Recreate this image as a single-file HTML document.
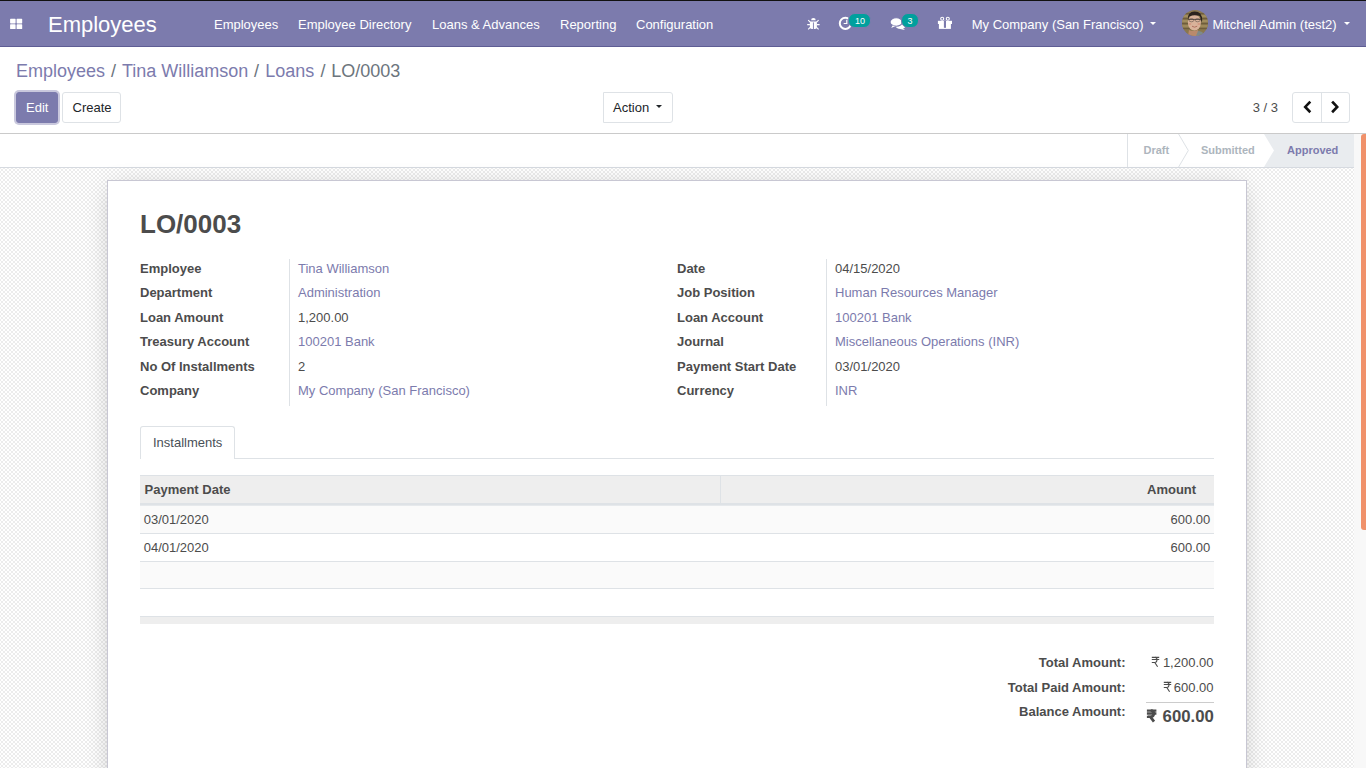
<!DOCTYPE html>
<html><head><meta charset="utf-8">
<style>
html,body{margin:0;padding:0}
body{width:1366px;height:768px;overflow:hidden;position:relative;background:#fff;font-family:"Liberation Sans",sans-serif;color:#4c4c4c;font-size:13px}
.a{position:absolute}
.t{position:absolute;white-space:nowrap;line-height:1}
.w{color:#fff}
.lnk{color:#7c7bad}
.b{font-weight:bold}
#topline{left:0;top:0;width:1366px;height:1px;background:#111}
#nav{left:0;top:1px;width:1366px;height:45px;background:#7c7bad;border-bottom:1px solid #5e5d94}
#cp{left:0;top:47px;width:1366px;height:86px;background:#fff;border-bottom:1px solid #cacaca}
#sb{left:0;top:134px;width:1354px;height:33px;background:#fff;border-bottom:1px solid #d6dae0}
#bg{left:0;top:168px;width:1354px;height:600px;background-color:#fff;background-image:repeating-conic-gradient(#ececec 0 25%,#fff 0 50%);background-size:4px 4px;background-position:3px 1px}
#sheet{left:107px;top:180px;width:1138px;height:620px;background:#fff;border:1px solid #c8c7d3;box-shadow:0 4px 24px -6px rgba(0,0,0,.26)}
#track{left:1354px;top:134px;width:12px;height:634px;background:#f8f8f8}
#thumb{left:1361px;top:134px;width:5px;height:396px;background:#f0916a;border-radius:3px 0 0 3px}
.btn{position:absolute;box-sizing:border-box;border:1px solid #dee2e6;background:#fff;border-radius:3px}
</style></head><body>
<div class="a" id="topline"></div>
<div class="a" id="nav"></div>
<div class="a" id="cp"></div>
<div class="a" id="sb"></div>
<div class="a" id="bg"></div>
<div class="a" id="sheet"></div>
<div class="a" id="track"></div>
<div class="a" id="thumb"></div>
<!-- apps icon -->
<svg class="a" style="left:8px;top:17px" width="16" height="14" viewBox="0 0 16 14">
 <rect x="2.1" y="1.8" width="5.5" height="4.6" rx="0.6" fill="#fff"/>
 <rect x="8.6" y="1.8" width="5.6" height="4.6" rx="0.6" fill="#fff"/>
 <rect x="2.1" y="7.3" width="5.5" height="4.7" rx="0.6" fill="#fff"/>
 <rect x="8.6" y="7.3" width="5.6" height="4.7" rx="0.6" fill="#fff"/>
</svg>
<div class="t w" style="left:48px;top:13.6px;font-size:22px">Employees</div>
<div class="t w" style="left:214px;top:18px">Employees</div>
<div class="t w" style="left:298px;top:18px">Employee Directory</div>
<div class="t w" style="left:432px;top:18px">Loans &amp; Advances</div>
<div class="t w" style="left:560px;top:18px">Reporting</div>
<div class="t w" style="left:636px;top:18px">Configuration</div>

<div class="t w" style="left:971.7px;top:18px">My Company (San Francisco)</div>
<div class="t w" style="left:1212.4px;top:18px">Mitchell Admin (test2)</div>


<!-- navbar icons -->
<svg class="a" style="left:806px;top:17px" width="14" height="14" viewBox="0 0 14 14">
 <path d="M5.1,3.3 A2.3,2.3 0 0 1 9.7,3.3 Z" fill="#fff"/>
 <path d="M3.9,4.5 H10.9 V10.2 Q10.9,12 9,12 H5.8 Q3.9,12 3.9,10.2 Z" fill="#fff"/>
 <rect x="6.95" y="5.4" width="0.9" height="7" fill="#7c7bad"/>
 <path d="M4.2,5.2 L2.2,3.1 M3.9,7.6 H1.2 M4.2,10.4 L2.2,12.4 M10.6,5.2 L12.6,3.1 M10.9,7.6 H13.6 M10.6,10.4 L12.6,12.4" stroke="#fff" stroke-width="1.1" fill="none"/>
</svg>
<svg class="a" style="left:838px;top:16px" width="16" height="16" viewBox="0 0 16 16">
 <circle cx="7.4" cy="7.35" r="5.6" stroke="#fff" stroke-width="2" fill="none"/>
 <path d="M8.8,3.7 V7.5 H5.7" stroke="#fff" stroke-width="1.2" fill="none"/>
</svg>
<div class="a" style="left:848.2px;top:12.9px;width:21px;height:13.1px;border-radius:7px;background:#00a09d;border:1px solid #7c7bad"></div>
<div class="t w" style="left:855px;top:16.5px;font-size:9px">10</div>
<svg class="a" style="left:886px;top:12px" width="22" height="20" viewBox="0 0 22 20">
 <ellipse cx="14.6" cy="13.4" rx="5.2" ry="3.7" fill="#fff"/>
 <path d="M16.4,15.8 L19,18.1 L14,17 Z" fill="#fff"/>
 <ellipse cx="10.2" cy="10" rx="6.15" ry="4.3" fill="#fff" stroke="#7c7bad" stroke-width="1.1"/>
 <path d="M6.6,13.6 L5.2,16 L9.6,14.1 Z" fill="#fff"/>
</svg>
<div class="a" style="left:901px;top:12.9px;width:16px;height:13.1px;border-radius:7px;background:#00a09d;border:1px solid #7c7bad"></div>
<div class="t w" style="left:907.5px;top:16.5px;font-size:9px">3</div>
<svg class="a" style="left:937px;top:16px" width="16" height="14" viewBox="0 0 16 14">
 <circle cx="5.2" cy="2.7" r="1.5" stroke="#fff" stroke-width="1.1" fill="none"/>
 <circle cx="10.8" cy="2.7" r="1.5" stroke="#fff" stroke-width="1.1" fill="none"/>
 <rect x="0.9" y="4.8" width="14.1" height="3.2" fill="#fff"/>
 <rect x="1.9" y="7.9" width="12" height="5" fill="#fff"/>
 <rect x="6.9" y="5" width="2.1" height="6.8" fill="#7c7bad"/>
</svg>
<div class="a" style="left:1149.7px;top:22px;width:0;height:0;border-top:3.5px solid #fff;border-left:3.2px solid transparent;border-right:3.2px solid transparent"></div>
<div class="a" style="left:1343.7px;top:21.5px;width:0;height:0;border-top:3.5px solid #fff;border-left:3.2px solid transparent;border-right:3.2px solid transparent"></div>
<div class="a" style="left:1182px;top:10px;width:26px;height:26px;border-radius:50%;overflow:hidden"><svg style="display:block" width="26" height="26" viewBox="0 0 26 26">
 <g>
  <rect width="26" height="26" fill="#8a774e"/>
  <rect x="0" y="3" width="26" height="1.2" fill="#6e5d3c"/>
  <rect x="0" y="8" width="26" height="1.2" fill="#6e5d3c"/>
  <rect x="0" y="13" width="26" height="1.2" fill="#6e5d3c"/>
  <rect x="0" y="18" width="26" height="1.2" fill="#6e5d3c"/>
  <rect x="0" y="5" width="26" height="2" fill="#a08c5e"/>
  <rect x="0" y="10" width="26" height="2" fill="#a08c5e"/>
  <rect x="0" y="15" width="26" height="2" fill="#9c885a"/>
  <path d="M6,26 L7,20 Q11,22 16,20 L17,26 Z" fill="#b98a6c"/>
  <path d="M14,26 L16,21 Q20,21 22,24 L22,26 Z" fill="#7e8a8a"/>
  <ellipse cx="12.4" cy="12.6" rx="6.5" ry="8" fill="#d9b29a"/>
  <path d="M5.8,9.6 Q5.4,1.6 12.6,1.4 Q20.4,1.4 20.2,10.6 L19.4,12.6 Q19,6.6 17,5.8 Q12,4.2 7.4,6.4 Q6.4,7.6 5.8,9.6 Z" fill="#2a221e"/>
  <path d="M6,9.4 H19" stroke="#3b3430" stroke-width="0.8"/>
  <ellipse cx="9.4" cy="10.2" rx="2.4" ry="1.6" fill="none" stroke="#4a413c" stroke-width="0.5"/>
  <ellipse cx="15.6" cy="10.2" rx="2.4" ry="1.6" fill="none" stroke="#4a413c" stroke-width="0.5"/>
  <ellipse cx="8" cy="14" rx="1.4" ry="1" fill="#d49a84"/>
  <ellipse cx="16.8" cy="14" rx="1.4" ry="1" fill="#d49a84"/>
  <path d="M10,16.2 Q12.6,18.2 15.2,16.2" stroke="#b07060" stroke-width="1" fill="none"/>
 </g>
</svg></div>



<div class="t lnk" style="left:16px;top:62px;font-size:18px">Employees</div>
<div class="t" style="left:111px;top:62px;font-size:18px;color:#6c757d">/</div>
<div class="t lnk" style="left:122px;top:62px;font-size:18px">Tina Williamson</div>
<div class="t" style="left:254px;top:62px;font-size:18px;color:#6c757d">/</div>
<div class="t lnk" style="left:265.3px;top:62px;font-size:18px">Loans</div>
<div class="t" style="left:320.6px;top:62px;font-size:18px;color:#6c757d">/</div>
<div class="t" style="left:331.3px;top:62px;font-size:18px;color:#6c757d">LO/0003</div>

<!-- buttons -->
<div class="a" style="left:14px;top:90px;width:46px;height:35px;border-radius:5px;background:#c9c8dd"></div>
<div class="btn" style="left:16px;top:92px;width:42px;height:31px;background:#7c7bad;border-color:#7c7bad"></div>
<div class="t w" style="left:26px;top:101px">Edit</div>
<div class="btn" style="left:62px;top:92px;width:59px;height:31px"></div>
<div class="t" style="left:72.5px;top:101px;color:#212529">Create</div>
<div class="btn" style="left:603px;top:92px;width:70px;height:31px;border-radius:0 3px 3px 0"></div>
<div class="t" style="left:613px;top:101px;color:#212529">Action</div>
<div class="a" style="left:656.2px;top:104.8px;width:0;height:0;border-top:3.6px solid #212529;border-left:3.3px solid transparent;border-right:3.3px solid transparent"></div>

<div class="t" style="left:1252.7px;top:101px;color:#4c4c4c">3 / 3</div>
<div class="btn" style="left:1292px;top:92px;width:58px;height:31px"></div>
<div class="a" style="left:1321px;top:93px;width:1px;height:29px;background:#dee2e6"></div>
<!-- pager chevrons -->
<svg class="a" style="left:1300px;top:98px" width="14" height="18" viewBox="0 0 14 18">
 <path d="M9.4,4.5 L5.2,8.9 L9.4,13.3" stroke="#111" stroke-width="2.6" fill="none" stroke-linecap="square"/>
</svg>
<svg class="a" style="left:1328px;top:98px" width="14" height="18" viewBox="0 0 14 18">
 <path d="M5,4.5 L9.2,8.9 L5,13.3" stroke="#111" stroke-width="2.6" fill="none" stroke-linecap="square"/>
</svg>



<!-- statusbar -->
<svg class="a" style="left:1100px;top:134px" width="254" height="33" viewBox="0 0 254 33">
 <rect x="27" y="0" width="1" height="33" fill="#dee2e6"/>
 <path d="M78.3,-0.5 L88.3,16.5 L78.3,33.5" stroke="#dee2e6" stroke-width="1" fill="none"/>
 <path d="M164,0 H254 V33 H164 L174,16.5 Z" fill="#e9ecef"/>
</svg>
<div class="t b" style="left:1143.5px;top:144.7px;font-size:11px;color:#adb5bd">Draft</div>
<div class="t b" style="left:1201px;top:144.7px;font-size:11px;color:#adb5bd">Submitted</div>
<div class="t b" style="left:1287px;top:144.7px;font-size:11px;color:#7c7bad">Approved</div>

<!-- sheet content -->
<div class="t b" style="left:140px;top:211.4px;font-size:26px">LO/0003</div>
<div class="a" style="left:289px;top:259px;width:1px;height:147px;background:#dee2e6"></div>
<div class="a" style="left:826px;top:259px;width:1px;height:147px;background:#dee2e6"></div>

<div class="t b" style="left:140px;top:262px">Employee</div>
<div class="t b" style="left:140px;top:286px">Department</div>
<div class="t b" style="left:140px;top:311px">Loan Amount</div>
<div class="t b" style="left:140px;top:335px">Treasury Account</div>
<div class="t b" style="left:140px;top:360px">No Of Installments</div>
<div class="t b" style="left:140px;top:384px">Company</div>
<div class="t lnk" style="left:298px;top:262px">Tina Williamson</div>
<div class="t lnk" style="left:298px;top:286px">Administration</div>
<div class="t" style="left:298px;top:311px">1,200.00</div>
<div class="t lnk" style="left:298px;top:335px">100201 Bank</div>
<div class="t" style="left:298px;top:360px">2</div>
<div class="t lnk" style="left:298px;top:384px">My Company (San Francisco)</div>

<div class="t b" style="left:677px;top:262px">Date</div>
<div class="t b" style="left:677px;top:286px">Job Position</div>
<div class="t b" style="left:677px;top:311px">Loan Account</div>
<div class="t b" style="left:677px;top:335px">Journal</div>
<div class="t b" style="left:677px;top:360px">Payment Start Date</div>
<div class="t b" style="left:677px;top:384px">Currency</div>
<div class="t" style="left:835px;top:262px">04/15/2020</div>
<div class="t lnk" style="left:835px;top:286px">Human Resources Manager</div>
<div class="t lnk" style="left:835px;top:311px">100201 Bank</div>
<div class="t lnk" style="left:835px;top:335px">Miscellaneous Operations (INR)</div>
<div class="t" style="left:835px;top:360px">03/01/2020</div>
<div class="t lnk" style="left:835px;top:384px">INR</div>

<!-- tabs -->
<div class="a" style="left:140px;top:458px;width:1074px;height:1px;background:#dee2e6"></div>
<div class="a" style="left:140px;top:426px;width:93px;height:32px;background:#fff;border:1px solid #dee2e6;border-bottom:none;border-radius:3px 3px 0 0"></div>
<div class="t" style="left:153px;top:435.7px;color:#495057">Installments</div>

<!-- table -->
<div class="a" style="left:140px;top:475px;width:1074px;height:28px;background:#eee;border-top:1px solid #dee2e6;box-sizing:border-box"></div>
<div class="a" style="left:140px;top:503px;width:1074px;height:2px;background:#dee2e6"></div>
<div class="a" style="left:720px;top:476px;width:1px;height:27px;background:#dee2e6"></div>
<div class="t b" style="left:144.5px;top:482.6px">Payment Date</div>
<div class="t b" style="left:1147px;top:482.6px">Amount</div>
<div class="a" style="left:140px;top:505px;width:1074px;height:28px;background:#fafafa"></div>
<div class="a" style="left:140px;top:505px;width:1074px;height:1px;background:#e6e9ec"></div>
<div class="a" style="left:140px;top:533px;width:1074px;height:1px;background:#dee2e6"></div>
<div class="a" style="left:140px;top:561px;width:1074px;height:1px;background:#dee2e6"></div>
<div class="a" style="left:140px;top:562px;width:1074px;height:26px;background:#fafafa"></div>
<div class="a" style="left:140px;top:588px;width:1074px;height:1px;background:#dee2e6"></div>
<div class="a" style="left:140px;top:616px;width:1074px;height:8px;background:#eee;border-top:1px solid #dee2e6;box-sizing:border-box"></div>
<div class="t" style="left:143.7px;top:513.2px">03/01/2020</div>
<div class="t" style="left:143.7px;top:540.6px">04/01/2020</div>
<div class="t" style="left:1170.5px;top:513.2px">600.00</div>
<div class="t" style="left:1170.5px;top:540.6px">600.00</div>

<!-- totals -->
<div class="t b" style="right:240.5px;top:655.9px">Total Amount:</div>
<div class="t b" style="right:240.5px;top:680.8px">Total Paid Amount:</div>
<div class="t b" style="right:240.5px;top:704.7px">Balance Amount:</div>
<div class="t" style="right:152.5px;top:655.9px">1,200.00</div>
<div class="t" style="right:152.5px;top:680.8px">600.00</div>
<div class="a" style="left:1146px;top:702px;width:68px;height:1px;background:#ccc"></div>
<div class="t b" style="right:152.1px;top:708.9px;font-size:16.8px">600.00</div>
<svg class="a" style="left:1151px;top:656px" width="9" height="12" viewBox="0 0 9 12">
 <path d="M0.8,1.4 H8.2 M0.8,3.5 H8.2 M0.8,6.5 H4" stroke="#4c4c4c" stroke-width="1.1" fill="none"/>
 <path d="M4.2,1.4 C6.6,1.6 6.6,6.3 3.8,6.5 L6.6,10.8" stroke="#4c4c4c" stroke-width="1.1" fill="none"/>
</svg>
<svg class="a" style="left:1162.5px;top:681px" width="9" height="12" viewBox="0 0 9 12">
 <path d="M0.8,1.4 H8.2 M0.8,3.5 H8.2 M0.8,6.5 H4" stroke="#4c4c4c" stroke-width="1.1" fill="none"/>
 <path d="M4.2,1.4 C6.6,1.6 6.6,6.3 3.8,6.5 L6.6,10.8" stroke="#4c4c4c" stroke-width="1.1" fill="none"/>
</svg>
<svg class="a" style="left:1146px;top:709px" width="11" height="14" viewBox="0 0 11 14">
 <path d="M0.9,1.6 H10.4 M0.9,4.5 H10.4 M0.9,7.8 H5" stroke="#4c4c4c" stroke-width="2.3" fill="none"/>
 <path d="M4.8,1.7 C8.8,1.9 8.8,7.6 4.4,7.8 L8,12.6" stroke="#4c4c4c" stroke-width="2.8" fill="none"/>
</svg>

</body></html>
